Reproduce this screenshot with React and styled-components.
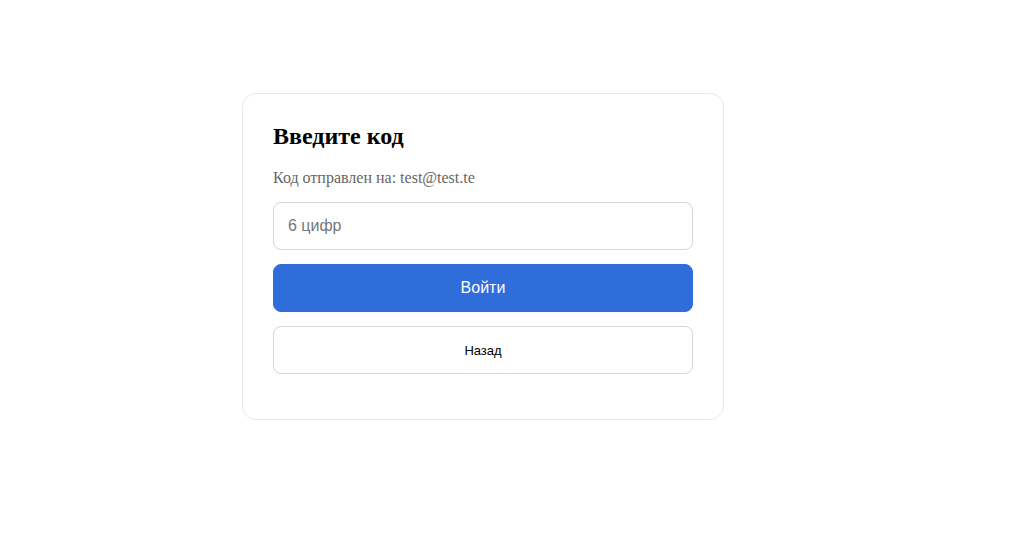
import React, { useState } from 'react'
import styled, { createGlobalStyle } from 'styled-components'

const GlobalStyle = createGlobalStyle`
  body {
    margin: 0;
    background: #ffffff;
    font-family: "Liberation Serif", "Times New Roman", serif;
  }
`

const Page = styled.div`
  display: flex;
  justify-content: center;
  padding: 93px 48px 0 0;
  min-height: 540px;
  box-sizing: border-box;
`

const Card = styled.div`
  width: 420px;
  padding: 28px 30px 45px;
  border: 1px solid #e8e8e8;
  border-radius: 14px;
  background: #fff;
  display: flex;
  flex-direction: column;
  align-self: flex-start;
`

const Title = styled.h2`
  margin: 0 0 18px;
  font-size: 24px;
  font-weight: bold;
  color: #000;
  line-height: 28px;
`

const Note = styled.p`
  margin: 0 0 15px;
  font-size: 16px;
  color: #666;
  line-height: 19px;
`

const CodeInput = styled.input`
  height: 48px;
  box-sizing: border-box;
  padding: 0 14px;
  border: 1px solid #d6d6d6;
  border-radius: 8px;
  font-family: "Liberation Sans", Arial, sans-serif;
  font-size: 16px;
  color: #222;
  outline: none;
  margin-bottom: 14px;
  &::placeholder {
    color: #777;
  }
`

const Button = styled.button`
  height: 48px;
  border-radius: 8px;
  font-family: "Liberation Sans", Arial, sans-serif;
  cursor: pointer;
  border: 1px solid ${(p) => (p.$primary ? '#2f6ddb' : '#d6d6d6')};
  background: ${(p) => (p.$primary ? '#2f6ddb' : '#fff')};
  color: ${(p) => (p.$primary ? '#fff' : '#000')};
  font-size: ${(p) => (p.$primary ? '16px' : '13px')};
  & + & {
    margin-top: 14px;
  }
`

export default function App() {
  const [code, setCode] = useState('')
  return (
    <>
      <GlobalStyle />
      <Page>
        <Card>
          <Title>Введите код</Title>
          <Note>Код отправлен на: test@test.te</Note>
          <CodeInput
            placeholder="6 цифр"
            value={code}
            onChange={(e) => setCode(e.target.value)}
          />
          <Button $primary>Войти</Button>
          <Button>Назад</Button>
        </Card>
      </Page>
    </>
  )
}
